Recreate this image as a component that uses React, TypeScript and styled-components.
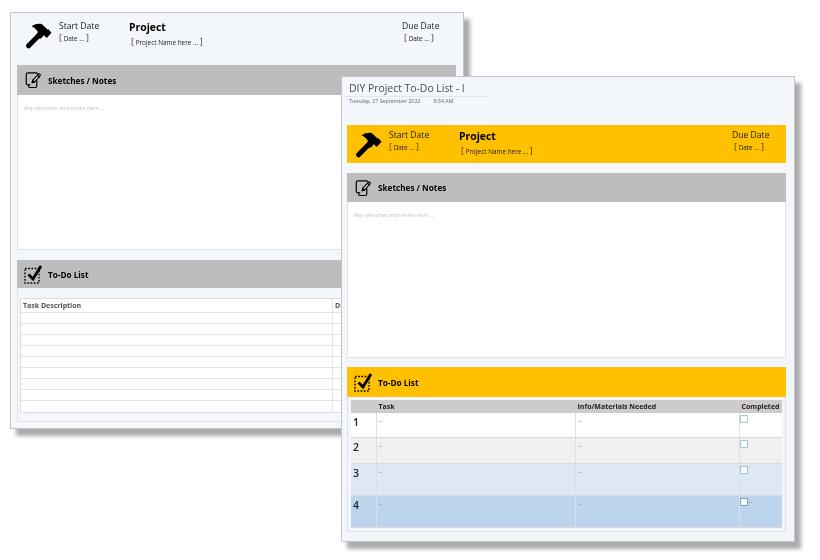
import React from "react";
import styled, { createGlobalStyle } from "styled-components";

const Global = createGlobalStyle`
  html, body { margin: 0; padding: 0; background: #fff; }
  body { font-family: "Open Sans", "Noto Sans", "Liberation Sans", sans-serif; color: #111; }
  * { box-sizing: border-box; }
`;

const Stage = styled.div`
  position: relative;
  width: 820px;
  height: 560px;
  overflow: hidden;
  background: #fff;
  filter: blur(0.4px);
`;

const Sheet = styled.div<{ $left: number; $top: number; $height: number; $pad: string }>`
  position: absolute;
  left: ${(p) => p.$left}px;
  top: ${(p) => p.$top}px;
  width: 454px;
  height: ${(p) => p.$height}px;
  padding: ${(p) => p.$pad};
  background: #f3f6fa;
  border: 1px solid #c2c6c9;
  box-shadow: 6px 7px 4px #ababab;
  display: flex;
  flex-direction: column;
`;

const TitleBlock = styled.div`
  width: 144px;
  margin-left: -2px;
  height: 45px;
`;

const Title = styled.div`
  font-size: 10.4px;
  line-height: 16px;
  color: #4d4d4d;
  padding-left: 4px;
  border-bottom: 1px solid #e3e6ea;
  white-space: nowrap;
`;

const Stamp = styled.div`
  display: flex;
  gap: 13px;
  padding-left: 4px;
  font-size: 5.3px;
  line-height: 8px;
  color: #666;
`;

const Banner = styled.div<{ $accent: boolean }>`
  height: ${(p) => (p.$accent ? 38 : 39)}px;
  flex: none;
  display: grid;
  grid-template-columns: 34px 70px 273px 1fr;
  padding-left: 8px;
  background: ${(p) => (p.$accent ? "#ffc000" : "transparent")};
`;

const HammerBox = styled.div`
  padding-top: 7px;
  svg { display: block; }
`;

const DateBlock = styled.div`
  padding-top: 5px;
`;

const DateLabel = styled.div`
  font-size: 8.6px;
  line-height: 11px;
  color: #222;
`;

const DateValue = styled.div<{ $indent?: number }>`
  font-size: 6.4px;
  line-height: 12px;
  padding-left: ${(p) => p.$indent ?? 0}px;
  color: #222;
`;

const Bracket = styled.span`
  font-size: 9px;
  color: #4a3d24;
`;

const ProjectBlock = styled.div`
  padding-top: 4px;
`;

const ProjectName = styled.div`
  font-size: 10.4px;
  line-height: 15px;
  font-weight: 700;
  color: #000;
`;

const ProjectValue = styled.div`
  font-size: 6.4px;
  line-height: 13px;
  padding-left: 2px;
  color: #222;
`;

const SectionHead = styled.div<{ $accent?: boolean; $h: number; $gap?: number }>`
  height: ${(p) => p.$h}px;
  flex: none;
  display: flex;
  align-items: center;
  gap: 6px;
  margin-top: ${(p) => p.$gap ?? 10}px;
  padding-left: 7px;
  background: ${(p) => (p.$accent ? "#ffc000" : "#bdbdbd")};
  font-size: 8.2px;
  font-weight: 700;
  color: #000;
`;

const NotesBody = styled.div<{ $height: number }>`
  height: ${(p) => p.$height}px;
  flex: none;
  background: #fff;
  border: 1px solid #dfe3e8;
  border-top: 0;
  padding: 9px 6px;
  font-size: 6px;
  line-height: 8px;
  font-style: italic;
  color: #c4c4c4;
`;

const TodoPanel = styled.div<{ $height: number; $pad: string }>`
  height: ${(p) => p.$height}px;
  flex: none;
  border: 1px solid #dfe3e8;
  border-top: 0;
  padding: ${(p) => p.$pad};
`;

const PlainTable = styled.div`
  background: #fff;
  border: 1px solid #dcdcdc;
  overflow: hidden;
`;

const PlainRow = styled.div<{ $head?: boolean }>`
  height: ${(p) => (p.$head ? 14 : 11)}px;
  display: grid;
  grid-template-columns: 312px 1fr;
  border-bottom: 1px solid #e4e4e4;
  font-size: 7px;
  line-height: 13px;
  font-weight: 700;
  color: #555;
  &:last-child { border-bottom: 0; }
`;

const PlainCell = styled.div`
  padding-left: 2px;
  border-right: 1px solid #e4e4e4;
  &:last-child { border-right: 0; }
`;

const GridTable = styled.div`
  display: flex;
  flex-direction: column;
`;

const HeadRow = styled.div`
  height: 13px;
  display: grid;
  grid-template-columns: 26px 199px 164px 1fr;
  background: #cdcbcb;
  font-size: 7px;
  line-height: 13px;
  font-weight: 700;
  color: #222;
`;

const HeadCell = styled.div`
  padding-left: 1.5px;
  white-space: nowrap;
`;

const DataRow = styled.div<{ $bg: string; $h: number }>`
  height: ${(p) => p.$h}px;
  display: grid;
  grid-template-columns: 26px 199px 164px 1fr;
  background: ${(p) => p.$bg};
  border-bottom: 1px solid #d6dbe0;
`;

const NumCell = styled.div`
  padding: 2px 0 0 2px;
  font-size: 10.5px;
  line-height: 15px;
  font-weight: 600;
  color: #222;
  border-right: 1px solid #dcdfe3;
`;

const TextCell = styled.div`
  padding: 3px 0 0 2px;
  font-size: 7px;
  line-height: 9px;
  color: #999;
  border-right: 1px solid #dcdfe3;
`;

const CheckCell = styled.div`
  display: flex;
  align-items: flex-start;
  gap: 1px;
  padding: 2px 0 0 0;
  font-size: 7px;
  line-height: 8px;
  color: #8a9aa8;
`;

const Check = styled.span<{ $strong?: boolean }>`
  display: block;
  width: 8px;
  height: 8px;
  background: #fff;
  border: 1px solid ${(p) => (p.$strong ? "#6fa6bd" : "#a3c6d6")};
`;

const Hammer = () => (
  <svg width="27" height="26" viewBox="0 0 27 26">
    <path d="M3.600 22.800L14.500 11.800" stroke="#000" strokeWidth="5" strokeLinecap="round" fill="none" />
    <path d="M6.500 3.200C10 1 14 .2 17 1.200L22.500 6.500 23.500 6.200 26.500 9.800 21.800 15 18.500 12 18 13.500 15 16 11 12.200 13 9C11.500 6.300 9 4.300 6.500 3.200z" fill="#000" />
  </svg>
);

const SketchIcon = () => (
  <svg width="18" height="18" viewBox="0 0 20 20" fill="none" stroke="#000" strokeWidth="1.300" strokeLinejoin="round" strokeLinecap="round">
    <path d="M2.500 14V4c0-1.200.8-2 2-2h9c1 0 1.800.6 2 1.500" />
    <path d="M2.500 14c0 .5.300 1 .8 1.100l1.700.3.300 2c.1.6.5.9 1.100.9h6.100c1 0 1.700-.7 1.700-1.700v-6" />
    <path d="M5 15.300c.6-.3 1-.3 1.400.2" />
    <path d="M9 13l1-3 6-6.300c.5-.5 1.200-.5 1.700 0 .5.500.5 1.200 0 1.700L11.800 12z" fill="#fff" />
    <path d="M15.300 5l1.700 1.700M9 13l2.200-.6" />
    <path d="M9.800 10.500l1.700 1.700" strokeWidth="1.800" />
  </svg>
);

const TodoIcon = () => (
  <svg width="18" height="19" viewBox="0 0 18 19" fill="none">
    <rect x="1" y="3.500" width="14" height="14.500" stroke="#000" strokeWidth="1.400" strokeDasharray="1.700 1.500" />
    <path d="M4.500 9.500l4.500 4.500L17 1" stroke="#000" strokeWidth="2.800" strokeLinejoin="miter" />
  </svg>
);

const BracketValue = ({ text }: { text: string }) => (
  <>
    <Bracket>[</Bracket> {text} <Bracket>]</Bracket>
  </>
);

const Header = ({ accent }: { accent: boolean }) => (
  <Banner $accent={accent}>
    <HammerBox>
      <Hammer />
    </HammerBox>
    <DateBlock>
      <DateLabel>Start Date</DateLabel>
      <DateValue>
        <BracketValue text="Date ..." />
      </DateValue>
    </DateBlock>
    <ProjectBlock>
      <ProjectName>Project</ProjectName>
      <ProjectValue>
        <BracketValue text="Project Name here ..." />
      </ProjectValue>
    </ProjectBlock>
    <DateBlock>
      <DateLabel>Due Date</DateLabel>
      <DateValue $indent={2}>
        <BracketValue text="Date ..." />
      </DateValue>
    </DateBlock>
  </Banner>
);

const rows = [
  { n: 1, bg: "#ffffff", h: 25 },
  { n: 2, bg: "#f0f0f0", h: 26 },
  { n: 3, bg: "#dde8f4", h: 32 },
  { n: 4, bg: "#bcd5ec", h: 32 },
];

export default function App() {
  return (
    <Stage>
      <Global />
      <Sheet $left={10} $top={12} $height={417} $pad="3px 7px 0 6px">
        <Header accent={false} />
        <SectionHead $h={30}>
          <SketchIcon />
          <span>Sketches / Notes</span>
        </SectionHead>
        <NotesBody $height={155}>Any sketches and notes here ...</NotesBody>
        <SectionHead $h={28}>
          <TodoIcon />
          <span>To-Do List</span>
        </SectionHead>
        <TodoPanel $height={134} $pad="10px 2px 0 2px">
          <PlainTable>
            <PlainRow $head>
              <PlainCell>Task Description</PlainCell>
              <PlainCell>Due</PlainCell>
            </PlainRow>
            {Array.from({ length: 9 }, (_, i) => (
              <PlainRow key={i}>
                <PlainCell />
                <PlainCell />
              </PlainRow>
            ))}
          </PlainTable>
        </TodoPanel>
      </Sheet>
      <Sheet $left={341} $top={76} $height={466} $pad="3px 8px 0 5px">
        <TitleBlock>
          <Title>DIY Project To-Do List - I</Title>
          <Stamp>
            <span>Tuesday, 27 September 2022</span>
            <span>9:34 AM</span>
          </Stamp>
        </TitleBlock>
        <Header accent />
        <SectionHead $h={29}>
          <SketchIcon />
          <span>Sketches / Notes</span>
        </SectionHead>
        <NotesBody $height={156}>Any sketches and notes here ...</NotesBody>
        <SectionHead $accent $h={30} $gap={9}>
          <TodoIcon />
          <span>To-Do List</span>
        </SectionHead>
        <TodoPanel $height={135} $pad="3px 3px 0 3px">
          <GridTable>
            <HeadRow>
              <HeadCell />
              <HeadCell>Task</HeadCell>
              <HeadCell>Info/Materials Needed</HeadCell>
              <HeadCell>Completed</HeadCell>
            </HeadRow>
            {rows.map((r) => (
              <DataRow key={r.n} $bg={r.bg} $h={r.h}>
                <NumCell>{r.n}</NumCell>
                <TextCell>–</TextCell>
                <TextCell>–</TextCell>
                <CheckCell>
                  <Check $strong={r.n === 4} />
                  {r.n === 4 ? "–" : null}
                </CheckCell>
              </DataRow>
            ))}
          </GridTable>
        </TodoPanel>
      </Sheet>
    </Stage>
  );
}
